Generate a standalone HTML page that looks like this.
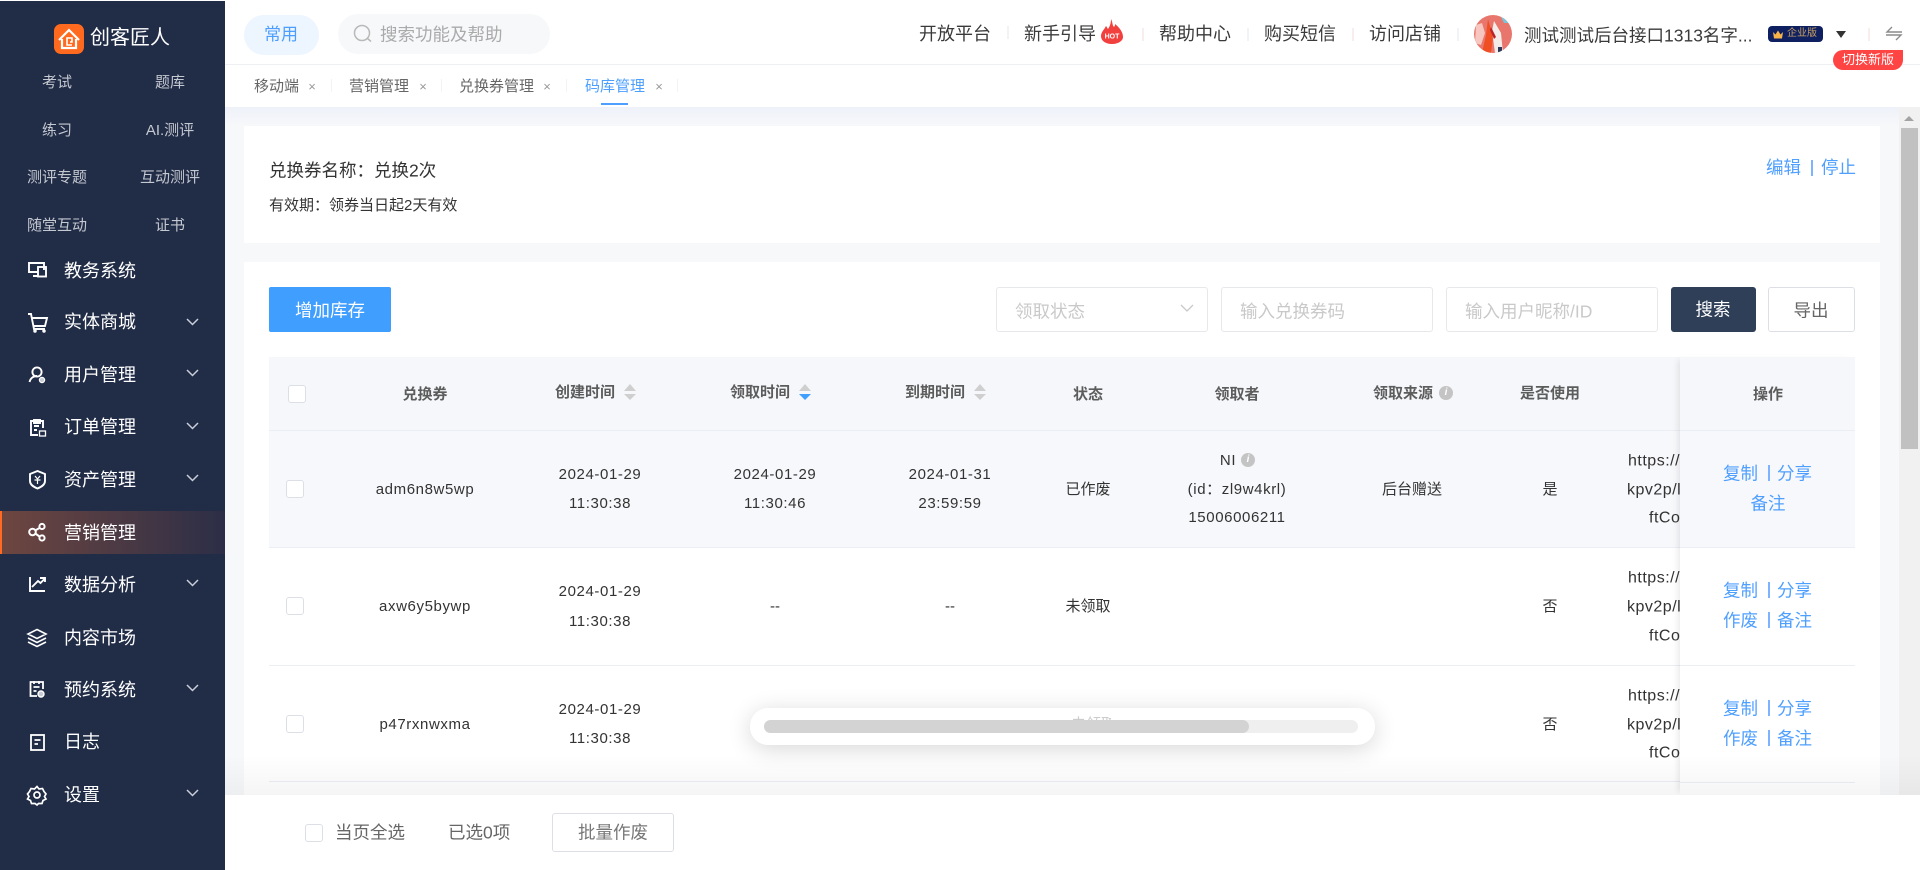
<!DOCTYPE html>
<html lang="zh-CN"><head><meta charset="utf-8"><title>码库管理</title>
<style>
html,body{margin:0;padding:0;width:1920px;height:870px;overflow:hidden;background:#fff}
body{position:relative;font-family:"Liberation Sans","Noto Sans CJK SC",sans-serif;color:#333}
div,span{box-sizing:border-box}
.a{position:absolute}
.l,.c{position:absolute;white-space:nowrap;line-height:1.2}
.l{transform:translateY(calc(-50% + 1px))}
.c{transform:translate(-50%,calc(-50% + 1px))}
.g{font-size:15px;color:#c4c8d0}
.m{font-size:18px;color:#fff;left:64px}
.n{font-size:18px;color:#3a3a3a}
.d{position:absolute;width:2px;height:13px;background:#f1f3f6}
.tab{font-size:15px;color:#666}
.x{font-size:13px;color:#999}
.th{font-size:15px;color:#5c5c5c;font-weight:bold}
.td{font-size:15px;color:#333}
.dt{font-size:15px;color:#333;letter-spacing:.6px}
.u{font-size:16px;color:#333;letter-spacing:.5px}
.lk{font-size:17.5px;color:#4f9fff}
.bar{position:absolute;width:2px;height:16px;background:#7db3ff}
.ipt{position:absolute;top:287px;height:45px;border:1px solid #e6e8ec;border-radius:3px;background:#fff}
.ph{font-size:17.5px;color:#c9c9c9}
.ln{position:absolute;height:1px;background:#ebeef5}
.cb{position:absolute;width:18px;height:18px;border:1px solid #dcdfe6;border-radius:3px;background:#fff}
</style></head>
<body>
<!-- sidebar -->
<div class="a" style="left:0;top:1px;width:225px;height:869px;background:#212c47"></div>
<div class="a" style="left:0;top:511px;width:225px;height:43px;background:linear-gradient(90deg,#6e4640,#2c2e47);border-left:2px solid #ff6b23"></div>
<svg class="a" style="left:0;top:0" width="225" height="870" fill="none" stroke="#fff" stroke-width="2">
<rect x="54" y="24" width="30" height="30" rx="7" fill="#ff6a1f" stroke="none"/>
<path d="M59 40 69 30l10 10M62 39v9h14v-9" stroke-width="2.2"/>
<path d="M72 45h-5v-7h5v4h-2" stroke-width="1.6"/>
<g stroke="#fff" stroke-width="1.9">
<path d="M44 270v-7H29v9h9M33 276h5"/><rect x="38" y="267" width="8" height="9.5"/>
<path d="M28 314h3l3 15h11M32 318h15l-2 8H34"/><circle cx="35" cy="331" r=".8"/><circle cx="44" cy="331" r=".8"/>
<circle cx="37" cy="372" r="4.6"/><path d="M29.5 382c1-4 4-6 7.5-6"/><circle cx="42" cy="380" r="2.6" fill="#c7ccd6" stroke="#fff" stroke-width="1.2"/>
<path d="M38 435h-7v-14h12v7M34 420h6v3h-6zM34 426h5M34 430h3"/><rect x="39.5" y="431" width="6" height="5" stroke-width="1.3"/>
<path d="M37.500 471 45 474v7c0 3.600-3 5.600-7.500 7.500C33 486.600 30 484.600 30 481v-7z"/><path d="M35 476l2.500 3 2.500-3M34.500 480h6M37.500 479v5" stroke-width="1.200"/>
</g>
<g stroke="#fff" stroke-width="2">
<circle cx="32.500" cy="532" r="3.300"/><circle cx="42" cy="526.500" r="2.600"/><circle cx="42" cy="538" r="2.600"/><path d="M36 530l3.500-2M36 534l3.500 2.500"/>
<path d="M30 577v14h15M32 587l6-6 2.500 2 4-4M40 578h5v4" stroke-width="1.900"/>
<path d="M37 629.500 46 634l-9 4.500-9-4.500zM28 638l9 4.500 9-4.500M28 642l9 4.500 9-4.500" stroke-width="1.600"/>
<path d="M37 696h-6.500v-14h12.500v7M34 681v3M39 681v3M33.500 687h6M33.500 691h3" stroke-width="1.800"/><circle cx="41" cy="694" r="3" stroke-width="1.400" fill="#c7ccd6"/>
<rect x="31" y="735" width="13" height="15" stroke-width="1.800"/><path d="M34.500 740h6M34.500 744h3.500" stroke-width="1.800"/>
<path d="M37 786.500l2 2.500 3.500-.500 1.500 3 2 2.500-1.500 2.500 1.500 2.500-3 1.500-1 3h-3.500l-1.500 1.500-2-1.500h-3.500l-1-3-3-1.500 1.500-2.500-1.500-2.500 2-2.500 1.500-3 3.500.500z" stroke-width="1.700"/><circle cx="37" cy="795" r="3" stroke-width="1.700"/>
</g>
<g stroke="#c9ced9" stroke-width="1.500">
<path d="M187 319l5.500 5.500 5.500-5.500M187 370l5.500 5.500 5.500-5.500M187 423l5.500 5.500 5.500-5.500M187 475l5.500 5.500 5.500-5.500M187 580l5.500 5.500 5.500-5.500M187 685l5.500 5.500 5.500-5.500M187 790l5.500 5.500 5.500-5.500"/>
</g>
</svg>
<div class="l" style="left:90px;top:37px;font-size:20px;color:#fff">创客匠人</div>
<div class="c g" style="left:57px;top:82px">考试</div><div class="c g" style="left:170px;top:82px">题库</div>
<div class="c g" style="left:57px;top:130px">练习</div><div class="c g" style="left:170px;top:130px">AI.测评</div>
<div class="c g" style="left:57px;top:177px">测评专题</div><div class="c g" style="left:170px;top:177px">互动测评</div>
<div class="c g" style="left:57px;top:225px">随堂互动</div><div class="c g" style="left:170px;top:225px">证书</div>
<div class="l m" style="top:271px">教务系统</div><div class="l m" style="top:322px">实体商城</div>
<div class="l m" style="top:375px">用户管理</div><div class="l m" style="top:427px">订单管理</div>
<div class="l m" style="top:480px">资产管理</div><div class="l m" style="top:533px">营销管理</div>
<div class="l m" style="top:585px">数据分析</div><div class="l m" style="top:638px">内容市场</div>
<div class="l m" style="top:690px">预约系统</div><div class="l m" style="top:742px">日志</div>
<div class="l m" style="top:795px">设置</div>

<!-- header -->
<div class="a" style="left:225px;top:64px;width:1695px;height:1px;background:#eeeff2"></div>
<div class="a" style="left:244px;top:15px;width:75px;height:40px;border-radius:20px;background:#edf5ff"></div>
<div class="c" style="left:281px;top:34px;font-size:17px;color:#4d9fff">常用</div>
<div class="a" style="left:338px;top:14px;width:212px;height:40px;border-radius:20px;background:#f7f8fa"></div>
<svg class="a" style="left:353px;top:24px" width="20" height="20" fill="none" stroke="#b9b9b9" stroke-width="1.500"><circle cx="9" cy="9" r="7.500"/><path d="M14.500 14.500l3.500 3"/></svg>
<div class="l" style="left:380px;top:34px;font-size:17.500px;color:#aaa">搜索功能及帮助</div>
<div class="l n" style="left:919px;top:34px">开放平台</div><div class="d" style="left:1007px;top:26px"></div>
<div class="l n" style="left:1024px;top:34px">新手引导</div>
<svg class="a" style="left:1100px;top:18px" width="24" height="27"><path d="M11 1c2 4 1 6 3 8 1-1 1-2 1-3 4 3 8 8 8 13 0 4-5 7-11 7S1 23 1 18c0-4 3-6 5-10 1 1 1 2 2 3 2-3 3-6 3-10z" fill="#f2403e"/><text x="12" y="20.500" text-anchor="middle" font-size="7" font-weight="bold" fill="#fff" font-family="Liberation Sans,sans-serif">HOT</text></svg>
<div class="d" style="left:1142px;top:28px;background:#f8eeee"></div>
<div class="l n" style="left:1159px;top:34px">帮助中心</div><div class="d" style="left:1247px;top:28px"></div>
<div class="l n" style="left:1264px;top:34px">购买短信</div><div class="d" style="left:1352px;top:28px;background:#f8eeee"></div>
<div class="l n" style="left:1369px;top:34px">访问店铺</div><div class="d" style="left:1457px;top:28px"></div>
<svg class="a" style="left:1474px;top:15px" width="38" height="38"><defs><clipPath id="av"><circle cx="19" cy="19" r="19"/></clipPath></defs><g clip-path="url(#av)"><rect width="38" height="38" fill="#e8766c"/><path d="M26 0h12v8h-8z" fill="#7cc4d8"/><path d="M2 10l6-2 3 10-4 12-6-2z" fill="#f6c6bf"/><path d="M14 4l5 18-2 16h-9l4-18z" fill="#f04e23"/><path d="M20 6l7 12 2 20h-8l-3-22z" fill="#f3ece8"/><path d="M17 12l5 10-2 2-4-9z" fill="#b9232c"/><path d="M24 32h4v6h-4z" fill="#2b3a5a"/></g></svg>
<div class="l" style="left:1524px;top:35px;font-size:17.500px;color:#3a3a3a">测试测试后台接口1313名字...</div>
<div class="a" style="left:1768px;top:26px;width:55px;height:16px;border-radius:4px;background:#0f2060"></div>
<svg class="a" style="left:1773px;top:30px" width="10" height="9"><path d="M0 2l2.500 2.500L5 .5l2.500 4L10 2 9 8.500H1z" fill="#f5b54a"/></svg>
<div class="l" style="left:1787px;top:33px;font-size:10px;color:#c9a063">企业版</div>
<div class="a" style="left:1836px;top:31px;width:0;height:0;border-left:5.500px solid transparent;border-right:5.500px solid transparent;border-top:7px solid #333"></div>
<div class="d" style="left:1868px;top:28px;background:#f8eeee"></div>
<svg class="a" style="left:1885px;top:25px" width="18" height="16" fill="none" stroke="#8b8b8b" stroke-width="1.400"><path d="M17 7H2l5-5M1 10h15l-5 5"/></svg>
<div class="a" style="left:1833px;top:50px;width:70px;height:20px;border-radius:10px 0 10px 10px;background:#ff4444"></div>
<div class="c" style="left:1868px;top:59px;font-size:13px;color:#fff">切换新版</div>

<!-- tabs -->
<div class="l tab" style="left:254px;top:86px">移动端</div><div class="c x" style="left:312px;top:86px">×</div><div class="d" style="left:331px;top:79px;width:1px;height:13px"></div>
<div class="l tab" style="left:349px;top:86px">营销管理</div><div class="c x" style="left:423px;top:86px">×</div><div class="d" style="left:441px;top:79px;width:1px;height:13px"></div>
<div class="l tab" style="left:459px;top:86px">兑换券管理</div><div class="c x" style="left:547px;top:86px">×</div><div class="d" style="left:566px;top:79px;width:1px;height:13px"></div>
<div class="l tab" style="left:585px;top:86px;color:#4d9fff">码库管理</div><div class="c x" style="left:659px;top:86px">×</div><div class="d" style="left:677px;top:79px;width:1px;height:13px"></div>
<div class="a" style="left:601px;top:103px;width:27px;height:2px;background:#4d9fff"></div>

<!-- body -->
<div class="a" style="left:225px;top:107px;width:1695px;height:688px;background:#f7f8fa"></div>
<div class="a" style="left:225px;top:107px;width:1695px;height:19px;background:linear-gradient(#eef1f9,#f7f8fa)"></div>
<div class="a" style="left:1899px;top:107px;width:21px;height:688px;background:#f1f1f1"></div>
<div class="a" style="left:1901px;top:128px;width:17px;height:321px;background:#c1c1c1"></div>
<div class="a" style="left:1904px;top:116px;width:0;height:0;border-left:5px solid transparent;border-right:5px solid transparent;border-bottom:5px solid #a3a3a3"></div>

<div class="a" style="left:244px;top:126px;width:1636px;height:117px;background:#fff"></div>
<div class="l" style="left:269px;top:170px;font-size:17.500px;color:#333">兑换券名称&#xFF1A;兑换2次</div>
<div class="l" style="left:269px;top:205px;font-size:15px;color:#333">有效期&#xFF1A;领券当日起2天有效</div>
<div class="l lk" style="left:1766px;top:167px">编辑</div><div class="bar" style="left:1811px;top:160px"></div><div class="l lk" style="left:1821px;top:167px">停止</div>

<div class="a" style="left:244px;top:262px;width:1636px;height:533px;background:#fff"></div>
<div class="a" style="left:269px;top:287px;width:122px;height:45px;border-radius:2px;background:#409eff"></div>
<div class="c" style="left:330px;top:310px;font-size:17.500px;color:#fff">增加库存</div>
<div class="ipt" style="left:996px;width:212px"></div>
<div class="l ph" style="left:1015px;top:311px">领取状态</div>
<svg class="a" style="left:1180px;top:303px" width="14" height="10" fill="none" stroke="#c9c9c9" stroke-width="1.300"><path d="M1 2l6 6 6-6"/></svg>
<div class="ipt" style="left:1221px;width:212px"></div>
<div class="l ph" style="left:1240px;top:311px">输入兑换券码</div>
<div class="ipt" style="left:1446px;width:212px"></div>
<div class="l ph" style="left:1465px;top:311px">输入用户昵称/ID</div>
<div class="a" style="left:1671px;top:287px;width:85px;height:45px;border-radius:3px;background:#2f3f57"></div>
<div class="c" style="left:1713px;top:309px;font-size:17.500px;color:#fff">搜索</div>
<div class="a" style="left:1768px;top:287px;width:87px;height:45px;border:1px solid #dcdfe6;border-radius:3px;background:#fff"></div>
<div class="c" style="left:1811px;top:310px;font-size:17.500px;color:#666">导出</div>

<!-- table -->
<div class="a" style="left:269px;top:357px;width:1586px;height:73px;background:#f5f7fa"></div>
<div class="a" style="left:269px;top:430px;width:1586px;height:117px;background:#f7f8fb"></div>
<div class="ln" style="left:269px;top:430px;width:1586px"></div>
<div class="ln" style="left:269px;top:547px;width:1586px"></div>
<div class="ln" style="left:269px;top:665px;width:1586px"></div>
<div class="ln" style="left:269px;top:781px;width:1586px"></div>

<div class="cb" style="left:288px;top:385px"></div>
<div class="c th" style="left:425px;top:394px">兑换券</div>
<div class="c th" style="left:585px;top:392px">创建时间</div>
<div class="c th" style="left:760px;top:392px">领取时间</div>
<div class="c th" style="left:935px;top:392px">到期时间</div>
<svg class="a" style="left:0;top:0" width="1920" height="870">
<path d="M630 384l6 7h-12z" fill="#cfcfcf"/><path d="M624 394h12l-6 6z" fill="#cfcfcf"/>
<path d="M805 384l6 7h-12z" fill="#cfcfcf"/><path d="M799 394h12l-6 6z" fill="#409eff"/>
<path d="M980 384l6 7h-12z" fill="#cfcfcf"/><path d="M974 394h12l-6 6z" fill="#cfcfcf"/>
<circle cx="1446" cy="393" r="7" fill="#c4c4c4"/><circle cx="1248" cy="460" r="7" fill="#c4c4c4"/>
</svg>
<div class="c" style="left:1446px;top:392px;font-size:10px;color:#fff;font-style:italic;font-weight:bold">i</div>
<div class="c" style="left:1248px;top:459px;font-size:10px;color:#fff;font-style:italic;font-weight:bold">i</div>
<div class="c th" style="left:1088px;top:394px">状态</div>
<div class="c th" style="left:1237px;top:394px">领取者</div>
<div class="c th" style="left:1403px;top:393px">领取来源</div>
<div class="c th" style="left:1550px;top:393px">是否使用</div>

<!-- row1 -->
<div class="cb" style="left:286px;top:480px"></div>
<div class="c dt" style="left:425px;top:489px">adm6n8w5wp</div>
<div class="c dt" style="left:600px;top:474px">2024-01-29</div><div class="c dt" style="left:600px;top:503px">11:30:38</div>
<div class="c dt" style="left:775px;top:474px">2024-01-29</div><div class="c dt" style="left:775px;top:503px">11:30:46</div>
<div class="c dt" style="left:950px;top:474px">2024-01-31</div><div class="c dt" style="left:950px;top:503px">23:59:59</div>
<div class="c td" style="left:1088px;top:489px">已作废</div>
<div class="c dt" style="left:1228px;top:460px">NI</div>
<div class="c dt" style="left:1237px;top:489px">(id&#xFF1A;zl9w4krl)</div>
<div class="c dt" style="left:1237px;top:517px">15006006211</div>
<div class="c td" style="left:1412px;top:489px">后台赠送</div>
<div class="c td" style="left:1550px;top:489px">是</div>
<div class="l u" style="left:1628px;top:460px">https://abc</div><div class="l u" style="left:1627px;top:489px">kpv2p/link</div><div class="l u" style="left:1649px;top:517px">ftCode</div>
<!-- row2 -->
<div class="cb" style="left:286px;top:597px"></div>
<div class="c dt" style="left:425px;top:606px">axw6y5bywp</div>
<div class="c dt" style="left:600px;top:591px">2024-01-29</div><div class="c dt" style="left:600px;top:621px">11:30:38</div>
<div class="c td" style="left:775px;top:606px">--</div><div class="c td" style="left:950px;top:606px">--</div>
<div class="c td" style="left:1088px;top:606px">未领取</div>
<div class="c td" style="left:1550px;top:606px">否</div>
<div class="l u" style="left:1628px;top:577px">https://abc</div><div class="l u" style="left:1627px;top:606px">kpv2p/link</div><div class="l u" style="left:1649px;top:635px">ftCode</div>
<!-- row3 -->
<div class="cb" style="left:286px;top:715px"></div>
<div class="c dt" style="left:425px;top:724px">p47rxnwxma</div>
<div class="c dt" style="left:600px;top:709px">2024-01-29</div><div class="c dt" style="left:600px;top:738px">11:30:38</div>
<div class="c td" style="left:1550px;top:724px">否</div>
<div class="l u" style="left:1628px;top:695px">https://abc</div><div class="l u" style="left:1627px;top:724px">kpv2p/link</div><div class="l u" style="left:1649px;top:752px">ftCode</div>

<!-- fixed col -->
<div class="a" style="left:1680px;top:357px;width:175px;height:438px;background:#fff;box-shadow:-5px 0 6px -3px rgba(0,0,0,.09)"></div>
<div class="a" style="left:1680px;top:357px;width:175px;height:73px;background:#f5f7fa"></div>
<div class="a" style="left:1680px;top:430px;width:175px;height:117px;background:#f7f8fb"></div>
<div class="ln" style="left:1680px;top:430px;width:175px"></div>
<div class="ln" style="left:1680px;top:547px;width:175px"></div>
<div class="ln" style="left:1680px;top:665px;width:175px"></div>
<div class="ln" style="left:1680px;top:782px;width:175px"></div>
<div class="c th" style="left:1768px;top:394px">操作</div>
<div class="l lk" style="left:1723px;top:473px">复制</div><div class="bar" style="left:1768px;top:465px"></div><div class="l lk" style="left:1777px;top:473px">分享</div>
<div class="c lk" style="left:1768px;top:503px">备注</div>
<div class="l lk" style="left:1723px;top:590px">复制</div><div class="bar" style="left:1768px;top:582px"></div><div class="l lk" style="left:1777px;top:590px">分享</div>
<div class="l lk" style="left:1723px;top:620px">作废</div><div class="bar" style="left:1768px;top:612px"></div><div class="l lk" style="left:1777px;top:620px">备注</div>
<div class="l lk" style="left:1723px;top:708px">复制</div><div class="bar" style="left:1768px;top:700px"></div><div class="l lk" style="left:1777px;top:708px">分享</div>
<div class="l lk" style="left:1723px;top:738px">作废</div><div class="bar" style="left:1768px;top:730px"></div><div class="l lk" style="left:1777px;top:738px">备注</div>

<!-- fade -->
<div class="a" style="left:225px;top:755px;width:1695px;height:40px;background:linear-gradient(rgba(0,0,0,0),rgba(0,0,0,.04))"></div>

<!-- progress overlay -->
<div class="a" style="left:750px;top:708px;width:625px;height:37px;border-radius:18px;background:#fff;box-shadow:0 4px 24px rgba(0,0,0,.16)"></div>
<div class="a" style="left:1071px;top:715px;width:40px;height:5px;overflow:hidden"><div class="l" style="left:0;top:9px;font-size:15px;color:#ccc">未领取</div></div>
<div class="a" style="left:764px;top:720px;width:594px;height:13px;border-radius:6.500px;background:#efefef"></div>
<div class="a" style="left:764px;top:720px;width:485px;height:13px;border-radius:6.500px;background:#d3d3d3"></div>

<!-- footer -->
<div class="a" style="left:225px;top:795px;width:1695px;height:75px;background:#fff"></div>
<div class="cb" style="left:305px;top:824px"></div>
<div class="l" style="left:335px;top:832px;font-size:17.500px;color:#666">当页全选</div>
<div class="l" style="left:448px;top:832px;font-size:17.500px;color:#666">已选0项</div>
<div class="a" style="left:552px;top:813px;width:122px;height:39px;border:1px solid #dcdfe6;border-radius:3px;background:#fff"></div>
<div class="c" style="left:613px;top:832px;font-size:17.500px;color:#777">批量作废</div>
</body></html>
